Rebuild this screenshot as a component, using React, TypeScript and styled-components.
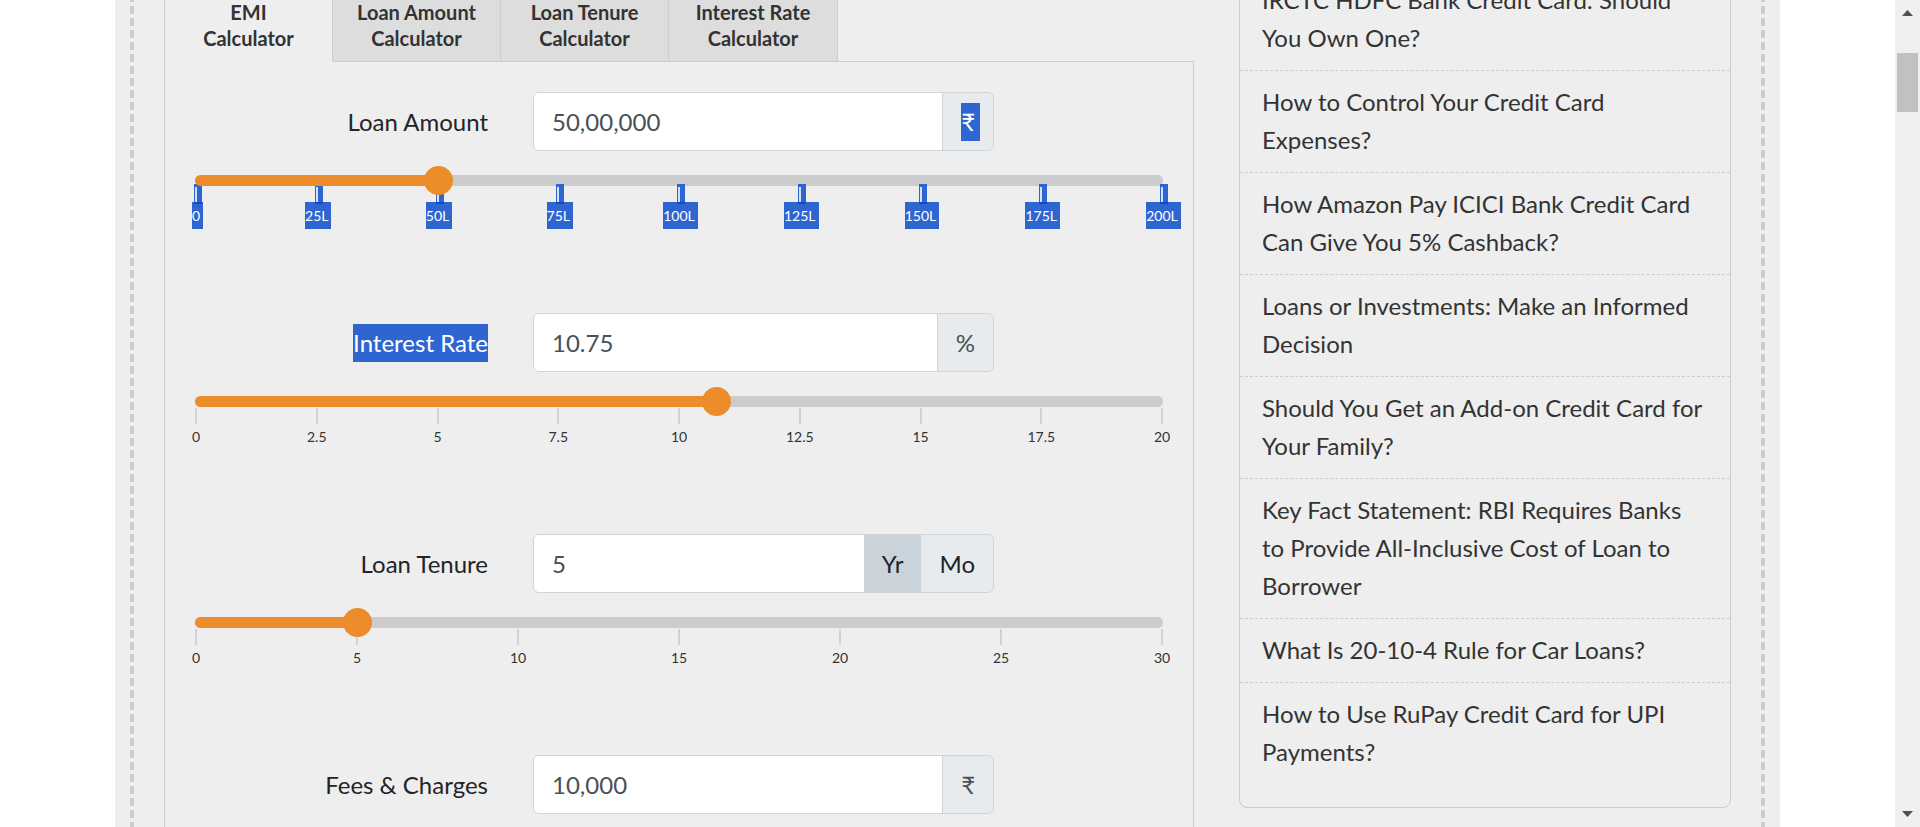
import React, { useState } from "react";
import styled, { createGlobalStyle, css } from "styled-components";

const colors = {
  sheet: "#eeeeee",
  line: "#cccccc",
  tab: "#dddddd",
  text: "#333333",
  label: "#212529",
  field: "#495057",
  fieldBorder: "#ced4da",
  addon: "#e7ebee",
  addonActive: "#cbd3da",
  accent: "#ed8c2b",
  select: "#2f65d1",
  selectDeep: "#0f4bc4",
};

const GlobalStyle = createGlobalStyle`
  *, *::before, *::after { box-sizing: border-box; }
  body {
    margin: 0;
    background: #fff;
    color: ${colors.label};
    font-family: Lato, "Liberation Sans", sans-serif;
    font-size: 24px;
    line-height: 38px;
  }
`;

const Viewport = styled.div`
  display: grid;
  grid-template-columns: minmax(0, 1fr) 25px;
  height: 100vh;
  overflow: hidden;
`;

const Content = styled.div`
  min-width: 0;
  height: 100vh;
  overflow: hidden;
`;

/* The page is shown part-way down its scroll range. */
const Sheet = styled.main`
  max-width: 1665px;
  min-height: 120vh;
  margin: -30px auto 0;
  padding: 0 15px;
  background: ${colors.sheet};
`;

const dashes = `repeating-linear-gradient(to bottom, ${colors.line} 0 8px, transparent 8px 12px)`;

const Frame = styled.div`
  display: grid;
  grid-template-columns: minmax(0, 1030fr) minmax(0, 492fr);
  gap: 45px;
  align-items: start;
  min-height: 120vh;
  padding: 0 34px;
  background: ${dashes} left top / 4px 100% no-repeat,
    ${dashes} right top / 4px 100% no-repeat;
`;

const Calculator = styled.section`
  padding-top: 18px;
`;

const TabList = styled.div`
  display: flex;
  position: relative;
  z-index: 1;
  margin-bottom: -1px;
`;

const Tab = styled.button<{ $active?: boolean }>`
  width: 168px;
  padding: 10px 12px;
  border: 1px solid ${colors.line};
  border-right-width: 0;
  border-bottom-color: ${(p) => (p.$active ? colors.sheet : colors.line)};
  background: ${(p) => (p.$active ? colors.sheet : colors.tab)};
  color: ${colors.text};
  font: bold 20px/26px Lato, "Liberation Sans", sans-serif;
  text-align: center;
  cursor: pointer;

  &:last-child {
    width: 170px;
    border-right-width: 1px;
  }
`;

const Panel = styled.form`
  padding: 30px 30px 0;
  border: 1px solid ${colors.line};
`;

const Field = styled.div`
  min-height: 221px;
`;

const FieldRow = styled.div`
  display: grid;
  grid-template-columns: minmax(0, 293fr) minmax(0, 461fr) minmax(0, 124fr);
  gap: 45px;
  align-items: center;
  margin-bottom: 15px;
`;

const FieldLabel = styled.label`
  justify-self: end;
`;

const selected = css`
  background: ${colors.select};
  color: #fff;
`;

const Highlight = styled.span`
  display: block;
  ${selected}
`;

const InputGroup = styled.div`
  display: flex;
  height: 59px;
  border: 1px solid ${colors.fieldBorder};
  border-radius: 6px;
  background: ${colors.addon};
  overflow: hidden;
`;

const TextInput = styled.input`
  flex: 1;
  min-width: 0;
  padding: 0 18px;
  border: 0;
  outline: 0;
  background: #fff;
  color: ${colors.field};
  font: inherit;
`;

const Addon = styled.span`
  display: flex;
  align-items: center;
  padding: 0 18px;
  border-left: 1px solid ${colors.fieldBorder};
  color: ${colors.field};
`;

const SelectedUnit = styled.span`
  margin-right: -5px;
  padding-right: 5px;
  ${selected}
`;

const UnitOption = styled.label`
  display: flex;
  align-items: center;
  padding: 0 18px;
  color: ${colors.label};
  cursor: pointer;

  &:has(input:checked) {
    background: ${colors.addonActive};
  }
`;

const UnitRadio = styled.input`
  appearance: none;
  width: 0;
  height: 0;
  margin: 0;
`;

const Slider = styled.div`
  display: grid;
  grid-template-columns: minmax(0, 1fr);
  align-items: start;

  & > * {
    grid-area: 1 / 1;
  }
`;

const Track = styled.div`
  height: 11px;
  margin-top: 9px;
  border-radius: 6px;
  background: ${colors.line};
`;

const Fill = styled(Track)`
  z-index: 2;
  background: ${colors.accent};
`;

const Range = styled.input`
  z-index: 3;
  appearance: none;
  width: calc(100% + 29px);
  height: 29px;
  margin: 0 0 0 -13px;
  background: transparent;
  cursor: pointer;

  &::-webkit-slider-thumb {
    appearance: none;
    width: 29px;
    height: 29px;
    border-radius: 50%;
    background: ${colors.accent};
  }
`;

const Scale = styled.div`
  z-index: 1;
  display: flex;
  justify-content: space-between;
  margin: 18px 1px 0;
`;

const Step = styled.div`
  display: flex;
  flex-direction: column;
  align-items: center;
  width: 0;
`;

const Mark = styled.span<{ $selected?: boolean }>`
  z-index: 1;
  flex: none;
  width: 8px;
  height: 20px;
  margin: 0 -6px -2px -2px;
  padding: 3px 0 0 1px;
  align-self: flex-start;
  ${(p) =>
    p.$selected &&
    css`
      background: ${colors.select};
      border-bottom: 2px solid ${colors.selectDeep};
    `}

  &::before {
    content: "";
    display: block;
    width: 2px;
    height: ${(p) => (p.$selected ? 15 : 16)}px;
    background: ${(p) => (p.$selected ? "#d3e2fb" : "#d2d2d4")};
  }
`;

const StepLabel = styled.span<{ $selected?: boolean }>`
  font-size: 14px;
  line-height: 27px;
  color: ${colors.text};
  ${(p) =>
    p.$selected &&
    css`
      margin-right: -3px;
      padding-right: 3px;
      ${selected}
    `}
`;

const Articles = styled.ul`
  margin: -2px 0 0;
  padding: 0 0 36px;
  border: 1px solid ${colors.line};
  border-radius: 8px;
  list-style: none;
`;

const Article = styled.li`
  padding: 12px 22px 13px;
  border-bottom: 1px dashed ${colors.line};

  &:last-child {
    padding-bottom: 0;
    border-bottom: 0;
  }
`;

const ArticleLink = styled.a`
  color: ${colors.text};
  text-decoration: none;
`;

const ScrollBar = styled.div`
  display: flex;
  flex-direction: column;
  align-items: center;
  background: #f0f0f0;
`;

const Arrow = styled.svg`
  display: block;
  width: 25px;
  height: 25px;
  fill: #505050;

  &:last-child {
    margin-top: auto;
  }
`;

const ScrollThumb = styled.div`
  width: 21px;
  height: 59px;
  margin-top: 28px;
  background: #c1c1c1;
`;

type SliderProps = {
  name: string;
  value: number;
  max: number;
  step: number;
  labels: string[];
  highlighted?: boolean;
  onChange: (value: number) => void;
};

function ScaleSlider({ name, value, max, step, labels, highlighted, onChange }: SliderProps) {
  return (
    <Slider>
      <Track />
      <Scale>
        {labels.map((label) => (
          <Step key={label}>
            <Mark $selected={highlighted} />
            <StepLabel $selected={highlighted}>{label}</StepLabel>
          </Step>
        ))}
      </Scale>
      <Fill style={{ width: `${(value / max) * 100}%` }} />
      <Range
        type="range"
        aria-label={name}
        min={0}
        max={max}
        step={step}
        value={value}
        onChange={(e) => onChange(Number(e.target.value))}
      />
    </Slider>
  );
}

const tabs = [
  ["EMI", "Calculator"],
  ["Loan Amount", "Calculator"],
  ["Loan Tenure", "Calculator"],
  ["Interest Rate", "Calculator"],
];

const articles = [
  "IRCTC HDFC Bank Credit Card: Should You Own One?",
  "How to Control Your Credit Card Expenses?",
  "How Amazon Pay ICICI Bank Credit Card Can Give You 5% Cashback?",
  "Loans or Investments: Make an Informed Decision",
  "Should You Get an Add-on Credit Card for Your Family?",
  "Key Fact Statement: RBI Requires Banks to Provide All-Inclusive Cost of Loan to Borrower",
  "What Is 20-10-4 Rule for Car Loans?",
  "How to Use RuPay Credit Card for UPI Payments?",
];

const toNumber = (text: string) => Number(text.replace(/[^0-9.]/g, "")) || 0;
const rupees = (value: number) => value.toLocaleString("en-IN");

export default function App() {
  const [activeTab, setActiveTab] = useState(0);
  const [amount, setAmount] = useState(5000000);
  const [rate, setRate] = useState(10.75);
  const [tenure, setTenure] = useState(5);
  const [fees, setFees] = useState(10000);
  const [unit, setUnit] = useState("Yr");

  return (
    <>
      <GlobalStyle />
      <Viewport>
        <Content>
          <Sheet>
            <Frame>
              <Calculator>
                <TabList role="tablist">
                  {tabs.map(([first, second], i) => (
                    <Tab
                      key={first}
                      type="button"
                      role="tab"
                      aria-selected={i === activeTab}
                      $active={i === activeTab}
                      onClick={() => setActiveTab(i)}
                    >
                      {first}
                      <br />
                      {second}
                    </Tab>
                  ))}
                </TabList>
                <Panel>
                  <Field>
                    <FieldRow>
                      <FieldLabel htmlFor="amount">Loan Amount</FieldLabel>
                      <InputGroup>
                        <TextInput
                          id="amount"
                          value={rupees(amount)}
                          onChange={(e) => setAmount(toNumber(e.target.value))}
                        />
                        <Addon>
                          <SelectedUnit>₹</SelectedUnit>
                        </Addon>
                      </InputGroup>
                    </FieldRow>
                    <ScaleSlider
                      name="Loan Amount"
                      value={amount}
                      max={20000000}
                      step={100000}
                      labels={["0", "25L", "50L", "75L", "100L", "125L", "150L", "175L", "200L"]}
                      highlighted
                      onChange={setAmount}
                    />
                  </Field>

                  <Field>
                    <FieldRow>
                      <FieldLabel htmlFor="rate">
                        <Highlight>Interest Rate</Highlight>
                      </FieldLabel>
                      <InputGroup>
                        <TextInput
                          id="rate"
                          value={rate}
                          onChange={(e) => setRate(toNumber(e.target.value))}
                        />
                        <Addon>%</Addon>
                      </InputGroup>
                    </FieldRow>
                    <ScaleSlider
                      name="Interest Rate"
                      value={rate}
                      max={20}
                      step={0.25}
                      labels={["0", "2.5", "5", "7.5", "10", "12.5", "15", "17.5", "20"]}
                      onChange={setRate}
                    />
                  </Field>

                  <Field>
                    <FieldRow>
                      <FieldLabel htmlFor="tenure">Loan Tenure</FieldLabel>
                      <InputGroup>
                        <TextInput
                          id="tenure"
                          value={tenure}
                          onChange={(e) => setTenure(toNumber(e.target.value))}
                        />
                        {["Yr", "Mo"].map((name) => (
                          <UnitOption key={name}>
                            <UnitRadio
                              type="radio"
                              name="unit"
                              checked={unit === name}
                              onChange={() => setUnit(name)}
                            />
                            {name}
                          </UnitOption>
                        ))}
                      </InputGroup>
                    </FieldRow>
                    <ScaleSlider
                      name="Loan Tenure"
                      value={tenure}
                      max={30}
                      step={1}
                      labels={["0", "5", "10", "15", "20", "25", "30"]}
                      onChange={setTenure}
                    />
                  </Field>

                  <Field>
                    <FieldRow>
                      <FieldLabel htmlFor="fees">Fees &amp; Charges</FieldLabel>
                      <InputGroup>
                        <TextInput
                          id="fees"
                          value={rupees(fees)}
                          onChange={(e) => setFees(toNumber(e.target.value))}
                        />
                        <Addon>₹</Addon>
                      </InputGroup>
                    </FieldRow>
                  </Field>
                </Panel>
              </Calculator>

              <Articles>
                {articles.map((title) => (
                  <Article key={title}>
                    <ArticleLink href="#">{title}</ArticleLink>
                  </Article>
                ))}
              </Articles>
            </Frame>
          </Sheet>
        </Content>

        <ScrollBar aria-hidden="true">
          <Arrow viewBox="0 0 25 25">
            <path d="M7 16 L12.5 10 L18 16 Z" />
          </Arrow>
          <ScrollThumb />
          <Arrow viewBox="0 0 25 25">
            <path d="M7 9 L12.5 15 L18 9 Z" />
          </Arrow>
        </ScrollBar>
      </Viewport>
    </>
  );
}
